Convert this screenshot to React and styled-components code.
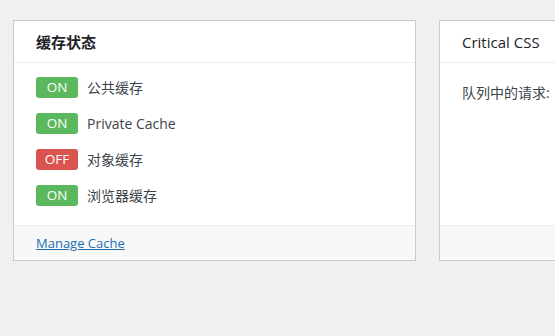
import React from 'react'
import styled, { createGlobalStyle } from 'styled-components'

const Global = createGlobalStyle`
  body {
    margin: 0;
    background: #f0f0f1;
    font-family: "Open Sans", "Noto Sans CJK SC", sans-serif;
    font-size: 14px;
    color: #3c434a;
  }
`

const Page = styled.div`
  display: flex;
  gap: 23px;
  padding: 20px 0 0 13px;
  width: 555px;
  height: 336px;
  box-sizing: border-box;
  overflow: hidden;
`

const Card = styled.div`
  flex: 0 0 auto;
  width: ${p => p.$width}px;
  height: 241px;
  box-sizing: border-box;
  background: #fff;
  border: 1px solid #c8cacd;
  display: flex;
  flex-direction: column;
`

const Header = styled.div`
  height: 41px;
  padding: 0 22px;
  display: flex;
  align-items: center;
  border-bottom: 1px solid #eeeeee;
  font-size: 15px;
  font-weight: ${p => (p.$bold ? 700 : 500)};
  color: #1d2327;
`

const Body = styled.div`
  flex: 1;
  padding: 13px 22px 0;
  display: flex;
  flex-direction: column;
  gap: 14px;
`

const Row = styled.div`
  display: flex;
  align-items: center;
  height: 22px;
  gap: 9px;
`

const Badge = styled.span`
  width: 42px;
  height: 21px;
  border-radius: 3px;
  background: ${p => (p.$on ? '#5cb85c' : '#d9534f')};
  color: #fff;
  font-size: 13.5px;
  display: flex;
  align-items: center;
  justify-content: center;
`

const Text = styled.div`
  padding-top: ${p => p.$top || 0}px;
  color: #3c434a;
`

const Footer = styled.div`
  height: 34px;
  padding: 0 22px;
  display: flex;
  align-items: center;
  background: #f8f8f8;
  border-top: 1px solid #eeeeee;
`

const Link = styled.a`
  color: #2271b1;
  font-size: 13px;
  text-decoration: underline;
  cursor: pointer;
`

const items = [
  { on: true, label: '公共缓存' },
  { on: true, label: 'Private Cache' },
  { on: false, label: '对象缓存' },
  { on: true, label: '浏览器缓存' },
]

export default function App() {
  return (
    <>
      <Global />
      <Page>
        <Card $width={403}>
          <Header $bold>缓存状态</Header>
          <Body>
            {items.map(it => (
              <Row key={it.label}>
                <Badge $on={it.on}>{it.on ? 'ON' : 'OFF'}</Badge>
                {it.label}
              </Row>
            ))}
          </Body>
          <Footer>
            <Link>Manage Cache</Link>
          </Footer>
        </Card>
        <Card $width={403}>
          <Header>Critical CSS</Header>
          <Body>
            <Text $top={6}>队列中的请求:</Text>
          </Body>
          <Footer />
        </Card>
      </Page>
    </>
  )
}
